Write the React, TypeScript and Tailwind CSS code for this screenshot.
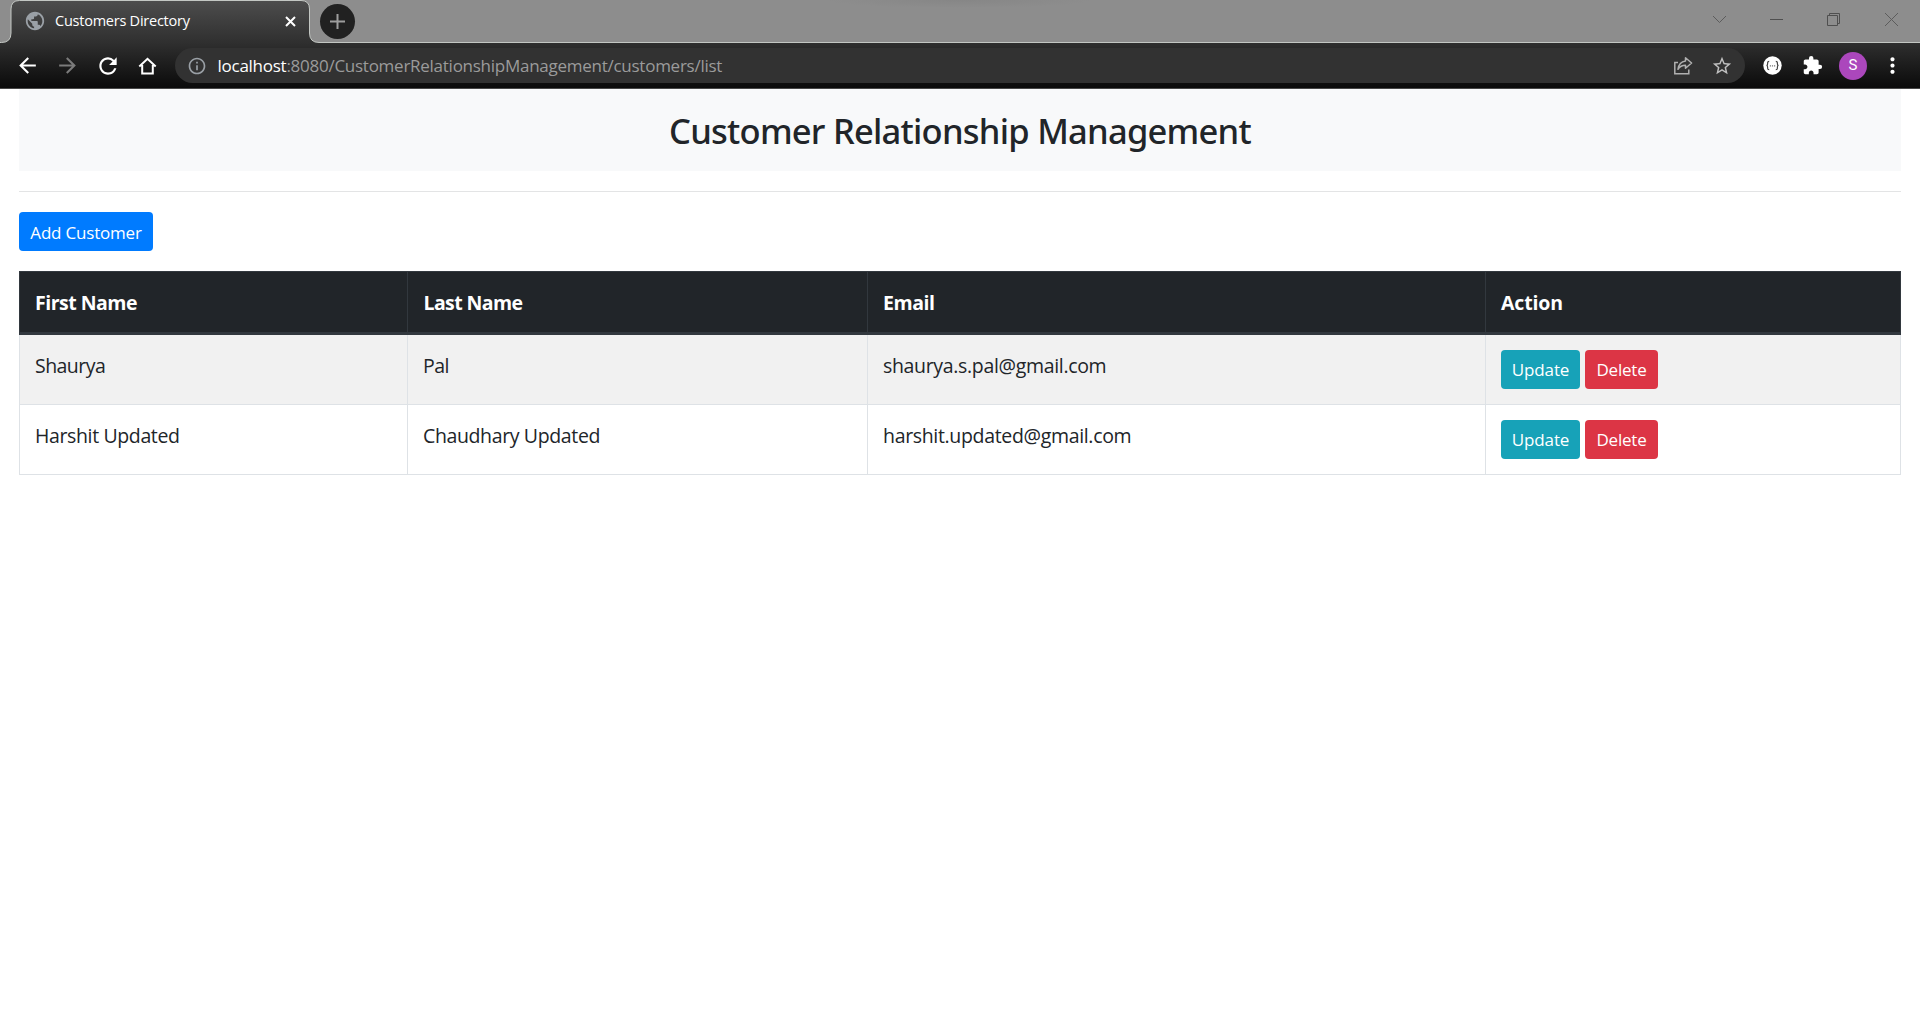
import React from "react";
import {
  MdArrowBack,
  MdArrowForward,
  MdRefresh,
  MdInfoOutline,
  MdPublic,
  MdExtension,
  MdStarBorder,
  MdMoreVert,
} from "react-icons/md";

const customers = [
  { first: "Shaurya", last: "Pal", email: "shaurya.s.pal@gmail.com", tint: "bg-[#f1f1f1]", gap: "tracking-[-0.55px]" },
  { first: "Harshit Updated", last: "Chaudhary Updated", email: "harshit.updated@gmail.com", tint: "bg-white", gap: "tracking-[-0.37px]" },
];

const columns = "grid grid-cols-[388px_460px_618px_416px]";

function TabStrip() {
  return (
    <div className="relative h-[43px] bg-[#8d8d8d]">
      <div className="absolute left-[825px] top-0 h-2 w-[270px] bg-radial-[at_50%_0%] from-[#868686] to-[#8d8d8d] to-70%" />
      <svg className="absolute inset-0" width="1920" height="43" viewBox="0 0 1920 43" fill="none">
        <defs>
          <linearGradient id="tab" x1="0" y1="0" x2="0" y2="1">
            <stop offset="0" stopColor="#4d4d4d" />
            <stop offset="1" stopColor="#2f2f2f" />
          </linearGradient>
        </defs>
        <path
          d="M0 43V42.5H1.5Q11 42.5 11 33V9Q11 .5 19.5 .5H301Q309.5 .5 309.5 9V33Q309.5 42.5 319 42.5V43Z"
          fill="url(#tab)"
        />
        <path
          d="M0 42.5H1.5Q11 42.5 11 33V9Q11 .5 19.5 .5H301Q309.5 .5 309.5 9V33Q309.5 42.5 319 42.5H1920"
          stroke="#c3c7c3"
        />
      </svg>
      <div className="relative flex h-[42px] items-center">
        <div className="ml-[24px] flex w-[285px] items-center">
          <MdPublic size={22} color="#9aa0a6" />
          <span className="ml-[9px] flex-1 text-[14.5px] leading-[20px] tracking-[-0.24px] text-white">
            Customers Directory
          </span>
          <svg className="mr-[13px]" width="11" height="11" viewBox="0 0 11 11" stroke="#fff" strokeWidth="2">
            <path d="M1 1l9 9M10 1l-9 9" />
          </svg>
        </div>
        <div className="ml-[11px] flex size-[35px] items-center justify-center rounded-full bg-[#212121]">
          <svg width="15" height="15" viewBox="0 0 15 15" stroke="#9d9d9d" strokeWidth="2">
            <path d="M7.5 0v15M0 7.5h15" />
          </svg>
        </div>
        <div className="mb-1 ml-auto mr-[22px] flex h-[36px] items-center">
          <svg className="mr-[43px]" width="15" height="14" viewBox="0 0 15 14" fill="none" stroke="#5c5c5c">
            <path d="M1 4l6.5 6.5L14 4" />
          </svg>
          <svg className="mr-[44px]" width="13" height="14" viewBox="0 0 13 14" stroke="#4f4f4f">
            <path d="M0 7.5h13" />
          </svg>
          <svg className="mr-[45px]" width="13" height="13" viewBox="0 0 13 13" fill="none" stroke="#4f4f4f">
            <path d="M.5 2.5h10v10H.5zM2.5 2.5v-2h10v10h-2" />
          </svg>
          <svg width="13" height="13" viewBox="0 0 13 13" stroke="#5c5c5c">
            <path d="M0 0l13 13M13 0L0 13" />
          </svg>
        </div>
      </div>
    </div>
  );
}

function Toolbar() {
  return (
    <div className="flex h-[46px] items-start border-b border-[#484848] bg-linear-to-b from-[#2f2f2f] to-[#0b0b0b] pt-[5px]">
      <div className="flex h-[35px] w-[175px] items-center pl-[15px] text-white">
        <MdArrowBack size={25} />
        <MdArrowForward size={25} className="ml-[15px] text-[#7b7b7b]" />
        <MdRefresh size={26} className="ml-[15px]" />
        <svg className="ml-[17px]" width="19" height="18" viewBox="0 0 19 18" fill="none" stroke="currentColor" strokeWidth="2">
          <path d="M1.3 9.4L9.5 1.8l8.2 7.6M4.2 8v8.6h10.6V8" />
        </svg>
      </div>
      <div className="flex h-[35px] w-[1570px] items-center rounded-full bg-[#323232] pl-[12px] pr-[12px]">
        <MdInfoOutline size={20} color="#9aa0a6" />
        <span className="ml-[10.5px] flex-1 whitespace-nowrap text-[17px] leading-[24px] tracking-[-0.26px] text-[#9b9b9b]">
          <span className="text-white">localhost</span>:8080/CustomerRelationshipManagement/customers/list
        </span>
        <svg className="mr-[18px]" width="20" height="19" viewBox="0 0 20 19" fill="none" stroke="#b0b0b0" strokeWidth="1.5">
          <path d="M5 6.5H1.8V17.7H15.8V13.5" />
          <path d="M12.5 1.8L18.6 7L12.5 12.2V9.2C9 9.2 6.8 10.4 5 13.3C5.6 8.6 8.2 5.6 12.5 5Z" strokeLinejoin="round" />
        </svg>
        <MdStarBorder size={22} color="#c0c0c0" />
      </div>
      <div className="flex h-[35px] flex-1 items-center text-white">
        <svg className="ml-[18px]" width="19" height="19" viewBox="0 0 19 19" fill="none">
          <circle cx="9.5" cy="9.5" r="9.2" fill="#fff" />
          <path
            d="M6.2 5.3q-1.6 0-1.6 1.5v1.3q0 1.3-1.1 1.4q1.1.1 1.1 1.4v1.3q0 1.5 1.6 1.5M12.8 5.3q1.6 0 1.6 1.5v1.3q0 1.3 1.1 1.4q-1.1.1-1.1 1.4v1.3q0 1.5-1.6 1.5"
            stroke="#444"
            strokeWidth="1.2"
          />
          <path d="M6.8 9.8h1.2M8.9 9.8h1.2M11 9.8h1.2" stroke="#777" strokeWidth="1.2" />
        </svg>
        <MdExtension size={21} className="ml-[20px]" />
        <div className="ml-[16px] flex size-[28px] items-center justify-center rounded-full bg-[#ab47bc] font-['Roboto',sans-serif] text-[15px]">
          S
        </div>
        <MdMoreVert size={25} className="ml-[13px]" />
      </div>
    </div>
  );
}

function Button({ label, className }: { label: string; className: string }) {
  return (
    <button
      className={`flex h-[39px] items-center justify-center rounded-[4px] text-[17px] leading-[25px] text-white ${className}`}
    >
      {label}
    </button>
  );
}

export default function App() {
  return (
    <div className="min-h-[1020px] bg-white font-['Open_Sans','Noto_Sans',sans-serif] text-[#212529]">
      <TabStrip />
      <Toolbar />
      <main className="mx-[19px]">
        <h2 className="flex h-[82px] items-center justify-center bg-[#f8f9fa] pt-[2px] font-['Noto_Sans',sans-serif] text-[34.5px] font-medium tracking-[-0.75px]">
          Customer Relationship Management
        </h2>
        <hr className="mt-5 border-[#e3e4e5]" />
        <Button label="Add Customer" className="mt-5 w-[134px] bg-[#007bff] pt-px tracking-[-0.2px]" />
        <div className="mt-5 text-[19.5px] leading-[30px]">
          <div className={`${columns} h-[64px] border border-b-[3px] border-[#32383e] bg-[#212529] font-bold text-white`}>
            <div className="flex items-center border-r border-[#32383e] pl-[15px] pt-[2px] tracking-[-0.5px]">First Name</div>
            <div className="flex items-center border-r border-[#32383e] pl-[15.5px] pt-[2px] tracking-[-0.6px]">Last Name</div>
            <div className="flex items-center border-r border-[#32383e] pl-[15px] pt-[2px] tracking-[-0.42px]">Email</div>
            <div className="flex items-center pl-[15px] pt-[2px] tracking-[-0.15px]">Action</div>
          </div>
          {customers.map((c) => (
            <div key={c.first} className={`${columns} h-[70px] border-x border-b border-[#dee2e6] ${c.tint}`}>
              <div className={`border-r border-[#dee2e6] pl-[15px] pt-[16px] ${c.gap}`}>{c.first}</div>
              <div className={`border-r border-[#dee2e6] pl-[15px] pt-[16px] ${c.gap}`}>{c.last}</div>
              <div className="border-r border-[#dee2e6] pl-[15px] pt-[16px] tracking-[-0.33px]">{c.email}</div>
              <div className="flex gap-[5px] pl-[15px] pt-[15px]">
                <Button label="Update" className="w-[79px] bg-[#17a2b8] tracking-[-0.1px]" />
                <Button label="Delete" className="w-[73px] bg-[#dc3545] tracking-[-0.2px]" />
              </div>
            </div>
          ))}
        </div>
      </main>
    </div>
  );
}
